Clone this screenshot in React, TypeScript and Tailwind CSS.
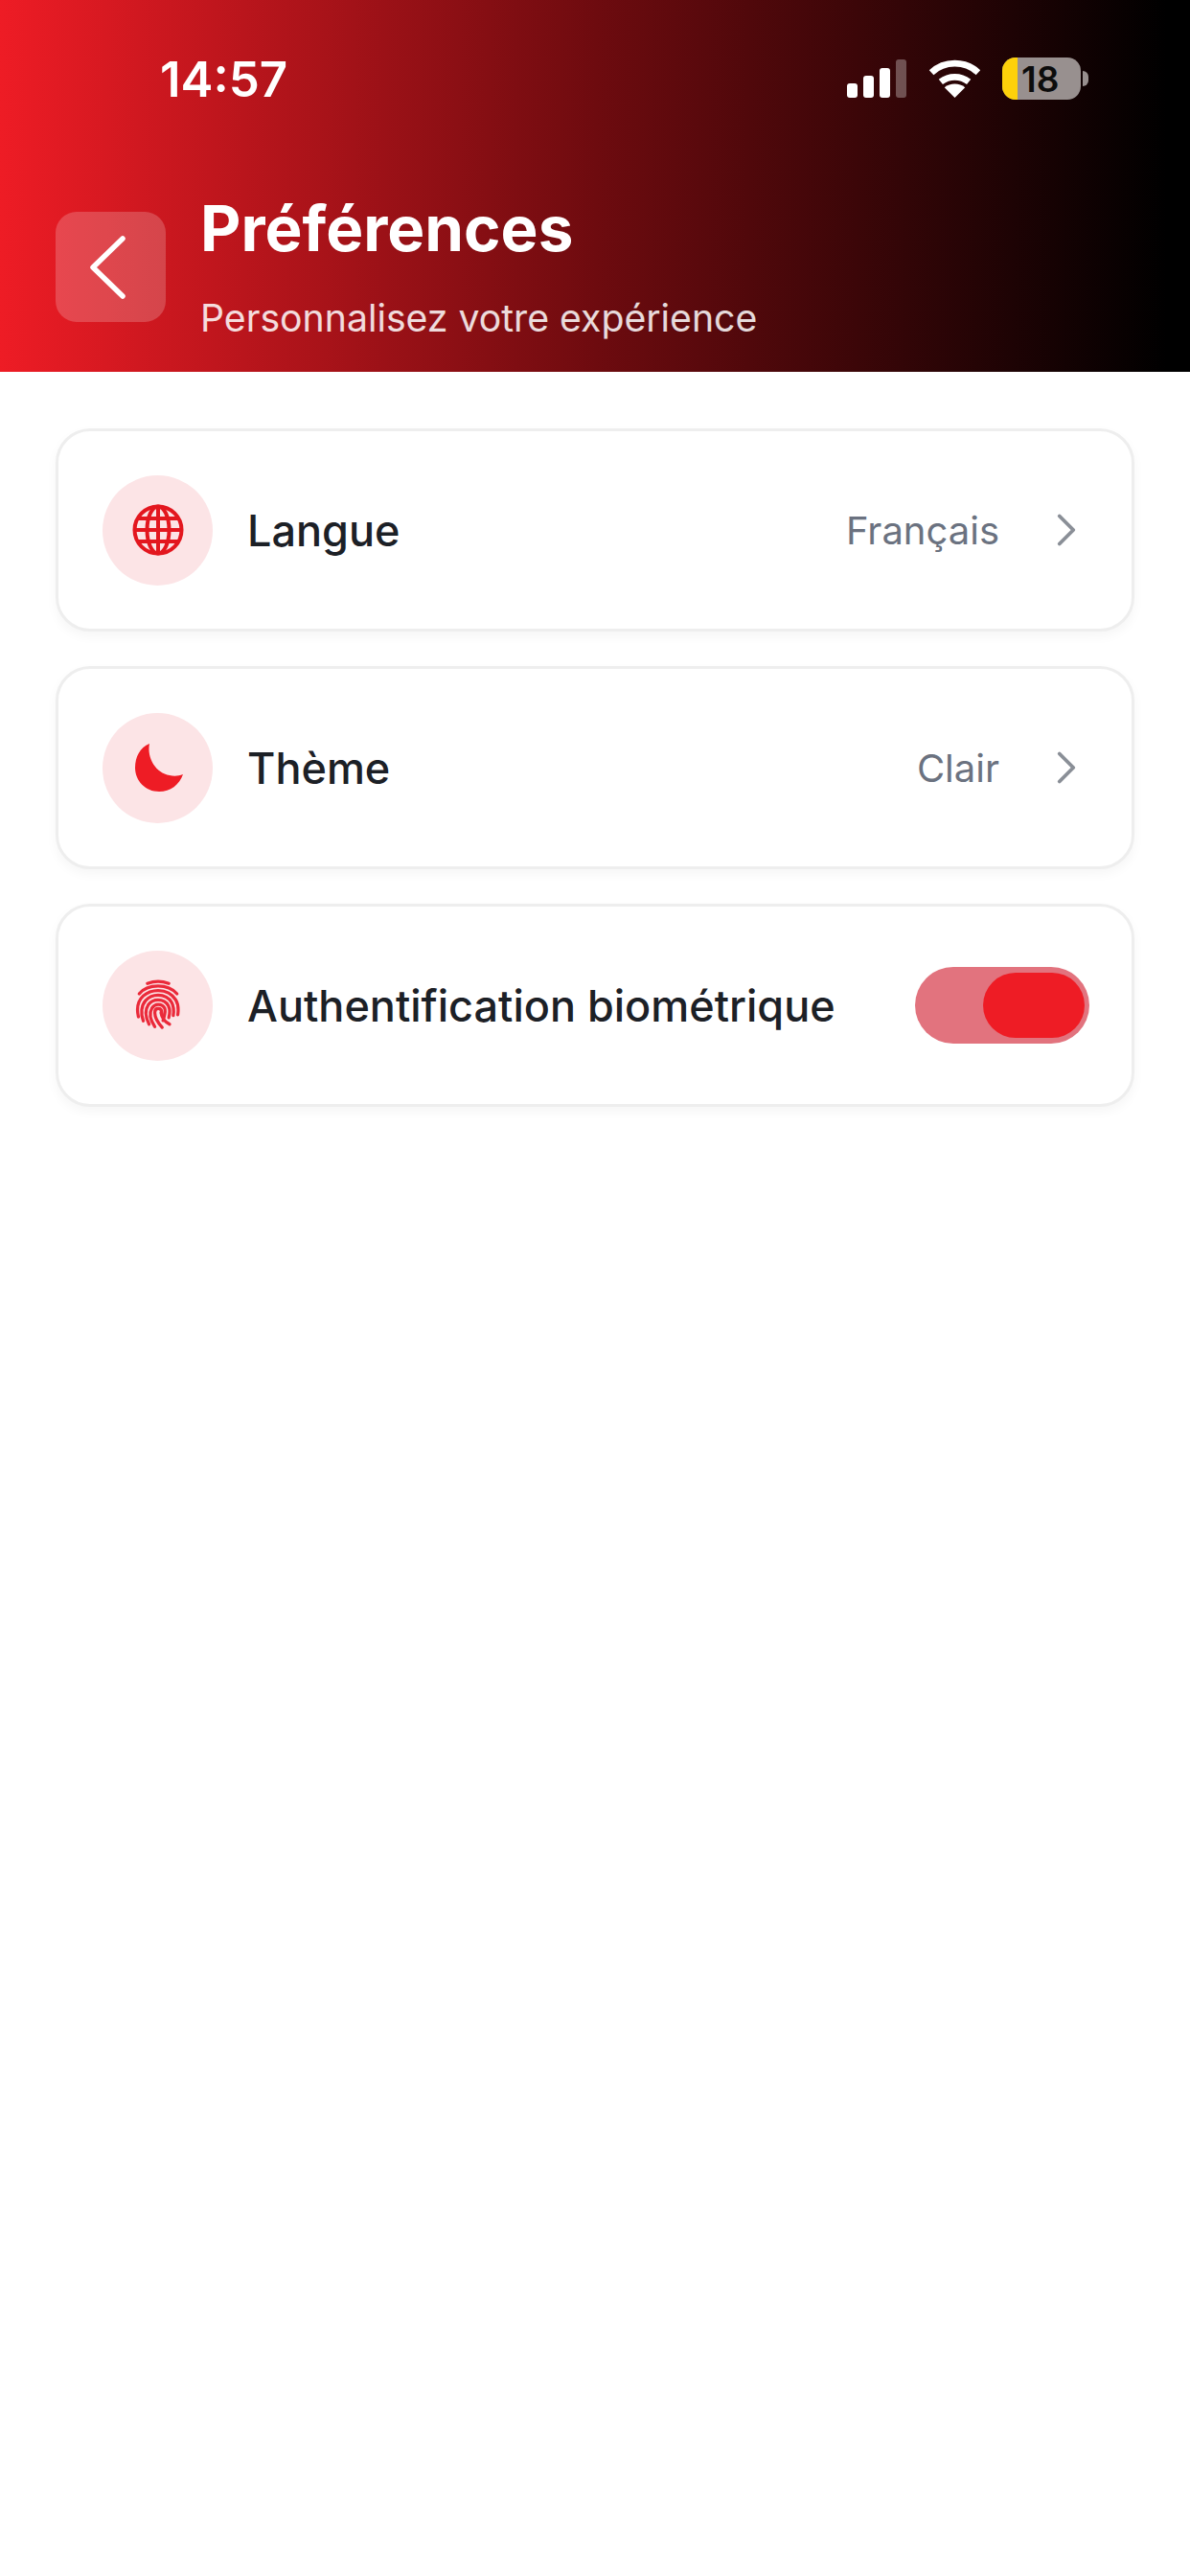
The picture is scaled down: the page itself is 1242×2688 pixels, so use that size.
import { ChevronRight } from 'lucide-react';
import type { ReactNode } from 'react';

function GlobeIcon() {
  return (
    <svg width="54" height="54" viewBox="0 0 54 54" fill="none" stroke="#e3171f" strokeWidth="4">
      <circle cx="27" cy="27" r="24.5" />
      <ellipse cx="27" cy="27" rx="11.5" ry="24.5" />
      <path d="M27 2.500v49M2.500 27h49M6 15h42M6 39h42" />
    </svg>
  );
}

function MoonIcon() {
  return (
    <svg className="ml-[2px]" width="50" height="50" viewBox="0 0 50 50">
      <path
        fill="#ee1c25"
        d="M15 0C5 4 0 14 0 25c0 14 11 25 25 25 12 0 21-7 25-18-5 2-10 2-14 1C22 31 12 15 15 0z"
      />
    </svg>
  );
}

function FingerprintIcon() {
  return (
    <svg width="48" height="54" viewBox="0 0 56 62" fill="none" stroke="#ea2a3a" strokeWidth="3.8" strokeLinecap="round">
      <path d="M15 4.500c8-3 18-3 26 0" />
      <path d="M5 17C11 9.500 19 7.500 28 7.500S45 10 51 17" />
      <path d="M4 45C1.500 34 4 25 10 19.500 15 15 21 13 28 13c9 0 17 4 21.500 11.500 3 5 3.500 11 2.500 18" />
      <path d="M10 50C6.500 41 7.500 31 13 25c4-4.500 9-6.500 15-6.500 7 0 13 3 16.500 9 2.500 4.500 3 9.500 2 16" />
      <path d="M17 54C13 46 11.500 37 16 30.500c3-4 7-6 12-6 5.500 0 10 2.500 12.500 7 2 4 2 9 .5 14.500" />
      <path d="M24 57C20 51 16 42 20.500 34.500c2-3 4.500-4.500 7.500-4.500 3.500 0 6.500 1.500 8 4.500 2 4-.5 10-2 15" />
      <path d="M33 58c-4.500-5-9-11-9-18 0-3 1.500-5 4-5 3 0 4.500 2 4.500 5 0 2 .5 3.500 2 5.500" />
      <path d="M42 54c-5-2.500-9.500-8-10.500-14" />
    </svg>
  );
}

function IconCircle({ children }: { children: ReactNode }) {
  return (
    <div className="flex h-[115px] w-[115px] shrink-0 items-center justify-center rounded-full bg-[#fce4e6]">
      {children}
    </div>
  );
}

function PreferenceRow({ icon, label, children }: { icon: ReactNode; label: string; children: ReactNode }) {
  return (
    <div className="flex h-[212px] items-center rounded-[36px] border-[3px] border-[#eeeeee] bg-white pl-[46px] pr-[44px] shadow-[0_5px_12px_rgba(0,0,0,0.04)]">
      <IconCircle>{icon}</IconCircle>
      <span className="ml-[36px] pt-[2px] text-[45px] font-medium text-[#1c2026]">{label}</span>
      <div className="ml-auto flex items-center">{children}</div>
    </div>
  );
}

function RowValue({ value }: { value: string }) {
  return (
    <>
      <span className="pt-[2px] text-[40px] text-[#6b7280]">{value}</span>
      <ChevronRight className="-mr-[5px] ml-[41px] text-[#8a8f97]" size={58} strokeWidth={1.6} />
    </>
  );
}

function StatusIcons() {
  return (
    <div className="flex items-center">
      <div className="flex items-end gap-[6px]">
        <div className="h-[15px] w-[11px] rounded-[3px] bg-white" />
        <div className="h-[23px] w-[11px] rounded-[3px] bg-white" />
        <div className="h-[31px] w-[11px] rounded-[3px] bg-white" />
        <div className="h-[40px] w-[11px] rounded-[3px] bg-white/30" />
      </div>
      <svg className="ml-[23px]" width="55" height="40" viewBox="0 0 56 41" fill="none" stroke="#fff" strokeWidth="7">
        <path d="M3 14C17 1 39 1 53 14" />
        <path d="M13 24c9-7 21-7 30 0" />
        <path fill="#fff" stroke="none" d="M28 41 17 30c6-5 16-5 22 0z" />
      </svg>
      <div className="ml-[22px] flex items-center">
        <div className="flex h-[44px] w-[82px] items-center overflow-hidden rounded-[14px] bg-[#98908f]">
          <div className="h-full w-[16px] shrink-0 bg-[#fdd10a]" />
          <span className="ml-[4px] text-[37px] font-semibold leading-none text-[#0c0c0c]">18</span>
        </div>
        <div className="ml-[2px] h-[16px] w-[6px] rounded-r-full bg-[#98908f]" />
      </div>
    </div>
  );
}

export default function App() {
  return (
    <div className="min-h-[2688px] bg-white font-['Inter',sans-serif]">
      <header className="h-[388px] bg-[linear-gradient(to_right,#ee1c25,#6e0b0f_50%,#000_98%)] pl-[58px] pr-[106px]">
        <div className="flex h-[164px] items-center justify-between pl-[109px]">
          <span className="pt-[3px] text-[51px] font-semibold text-white">14:57</span>
          <StatusIcons />
        </div>
        <div className="flex items-start">
          <button className="mt-[57px] flex h-[115px] w-[115px] items-center justify-center rounded-[22px] bg-white/20">
            <svg className="-ml-[7px]" width="42" height="70" viewBox="0 0 42 70" fill="none" stroke="#fff" strokeWidth="5.500" strokeLinecap="round" strokeLinejoin="round">
              <path d="M37 5 6 35l31 30" />
            </svg>
          </button>
          <div className="ml-[36px]">
            <h1 className="mt-[39px] text-[65.500px] font-bold leading-[72px] text-white">Préférences</h1>
            <p className="mt-[35px] text-[39.200px] leading-[44px] text-white/85">Personnalisez votre expérience</p>
          </div>
        </div>
      </header>
      <main className="flex flex-col gap-[36px] px-[58px] pt-[59px]">
        <PreferenceRow icon={<GlobeIcon />} label="Langue">
          <RowValue value="Français" />
        </PreferenceRow>
        <PreferenceRow icon={<MoonIcon />} label="Thème">
          <RowValue value="Clair" />
        </PreferenceRow>
        <PreferenceRow icon={<FingerprintIcon />} label="Authentification biométrique">
          <div className="flex h-[80px] w-[182px] items-center justify-end rounded-full bg-[#e2737e] pr-[5px]">
            <div className="h-[68px] w-[106px] rounded-full bg-[#ee1c25]" />
          </div>
        </PreferenceRow>
      </main>
    </div>
  );
}
